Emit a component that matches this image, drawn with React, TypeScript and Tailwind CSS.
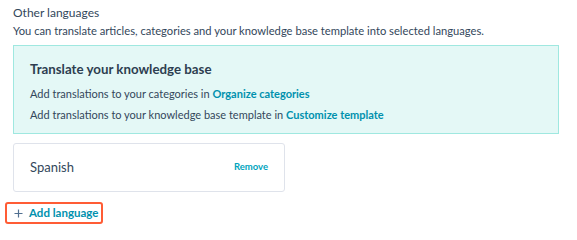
const font = { fontFamily: '"Lato", "Open Sans", sans-serif' };

export default function App() {
  return (
    <div className="h-[233px] w-[577px] bg-white pl-[13px] pt-[5px] text-[#33475b]" style={font}>
      <p className="text-[12px] leading-[16px]">Other languages</p>
      <p className="mt-[2px] text-[11.2px] leading-[16px]">
        You can translate articles, categories and your knowledge base template into selected languages.
      </p>
      <div className="mt-[6px] w-[546px] border border-[#9fe8e0] bg-[#e4f8f6] px-[16px] pb-[8px] pt-[14px]">
        <h2 className="text-[13.3px] font-bold leading-[18px] text-[#2d3e50]">Translate your knowledge base</h2>
        <p className="mt-[5px] text-[11px] leading-[21px]">
          Add translations to your categories in{" "}
          <a className="font-bold text-[#0091ae]">Organize categories</a>
        </p>
        <p className="text-[11px] leading-[21px]">
          Add translations to your knowledge base template in{" "}
          <a className="font-bold text-[#0091ae]">Customize template</a>
        </p>
      </div>
      <div className="mt-[9px] flex h-[49px] w-[272px] items-center justify-between rounded-[3px] border border-[#dfe3eb] bg-white pl-[16px] pr-[16px]">
        <span className="text-[13px]">Spanish</span>
        <button className="text-[9.5px] font-bold text-[#00a4bd]">Remove</button>
      </div>
      <div className="-ml-[8px] mt-[10px] flex h-[22px] w-[98px] items-center gap-[6px] rounded-[3px] border-2 border-[#ff5c35] pl-[7px]">
        <svg width="9" height="9" viewBox="0 0 9 9" className="text-[#516f90]">
          <path d="M4.5 0.5v8M0.5 4.5h8" stroke="currentColor" strokeWidth="1.2" />
        </svg>
        <span className="text-[11.5px] font-bold text-[#0091ae]">Add language</span>
      </div>
    </div>
  );
}
